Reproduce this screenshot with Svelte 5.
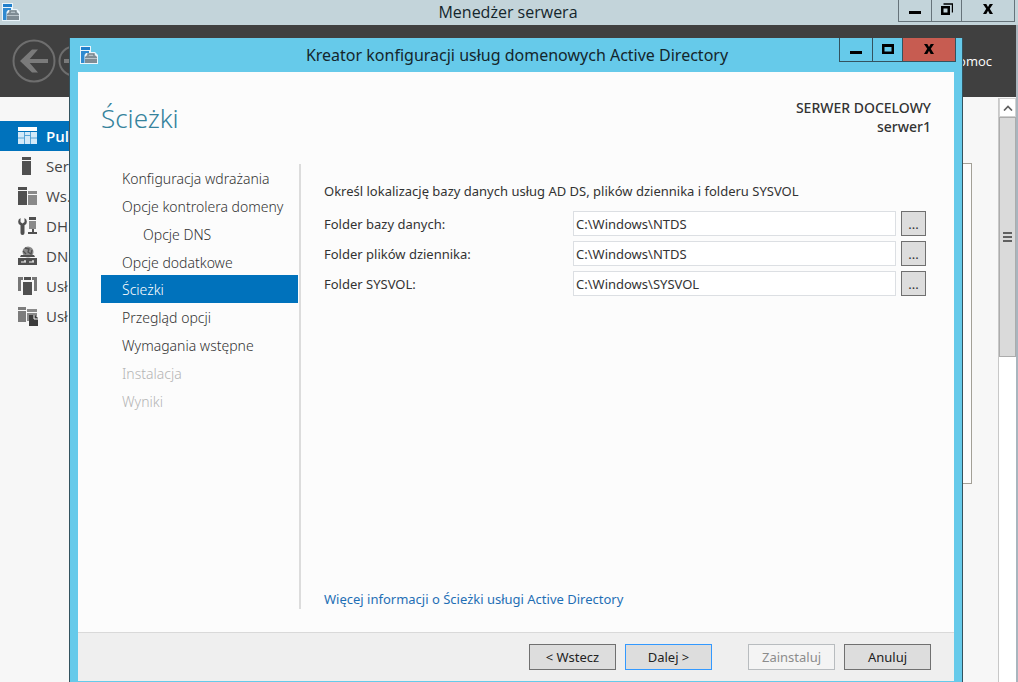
<script>
  const tools = [
    { label: 'Pul', icon: 'dashboard', active: true },
    { label: 'Ser', icon: 'server' },
    { label: 'Ws.', icon: 'servers' },
    { label: 'DH', icon: 'dhcp' },
    { label: 'DN', icon: 'dns' },
    { label: 'Usł', icon: 'domain' },
    { label: 'Usł', icon: 'files' }
  ];

  const steps = [
    { label: 'Konfiguracja wdrażania' },
    { label: 'Opcje kontrolera domeny' },
    { label: 'Opcje DNS', nested: true },
    { label: 'Opcje dodatkowe' },
    { label: 'Ścieżki', current: true },
    { label: 'Przegląd opcji' },
    { label: 'Wymagania wstępne' },
    { label: 'Instalacja', disabled: true },
    { label: 'Wyniki', disabled: true }
  ];

  let folders = $state([
    { id: 'database', label: 'Folder bazy danych:', path: 'C:\\Windows\\NTDS' },
    { id: 'logs', label: 'Folder plików dziennika:', path: 'C:\\Windows\\NTDS' },
    { id: 'sysvol', label: 'Folder SYSVOL:', path: 'C:\\Windows\\SYSVOL' }
  ]);
</script>

{#snippet appIcon()}
  <svg class="app-icon" width="20" height="20" viewBox="0 0 20 20" aria-hidden="true">
    <path d="M1 1h11v6h4l3 3v9H1z" fill="#eaf5fb" />
    <path d="M2 2h9v3H2z" fill="#1f7fcb" />
    <path d="M2 6h8v2H7L5.500 10v8H2z" fill="#2f8ad0" />
    <path d="M9 11V9h6v2" fill="none" stroke="#6f7c84" stroke-width="1.400" />
    <path d="M6 12l1.500-1.500h9L18 12v6H6z" fill="#7f8c94" />
    <path d="M6 13.500h12" stroke="#c9d3d8" stroke-width="0.800" />
  </svg>
{/snippet}

{#snippet windowButtons(restored, danger)}
  <div class="controls">
    <button class="control narrow" aria-label="Minimalizuj">
      <svg width="12" height="12" viewBox="0 0 12 12"><path d="M0 8h12v3H0z" /></svg>
    </button>
    <button class="control mid" aria-label={restored ? 'Maksymalizuj' : 'Przywróć'}>
      <svg width="12" height="12" viewBox="0 0 12 12">
        {#if restored}
          <path d="M0 1h12v10H0zM2.500 4v4.500h7V4z" fill-rule="evenodd" />
        {:else}
          <path d="M0 3h9v9H0zM2.500 5.500v4h4v-4z" fill-rule="evenodd" />
          <path d="M2.500 1h9v8.500" fill="none" stroke="#000" stroke-width="1.400" />
        {/if}
      </svg>
    </button>
    <button class="control wide" class:danger aria-label="Zamknij">
      <svg width="12" height="12" viewBox="0 0 12 12">
        <path d="M1 1h3.300L6 4l1.700-3H11L7.800 5.800 11 11H7.700L6 7.800 4.300 11H1l3.200-5.200z" />
      </svg>
    </button>
  </div>
{/snippet}

{#snippet toolIcon(name)}
  <svg width="20" height="20" viewBox="0 0 20 20" aria-hidden="true">
    {#if name === 'dashboard'}
      <path d="M0 1h19v4H0z" fill="#fff" />
      <path d="M0 6h19v12H0z" fill="#d3e9f8" />
      <path d="M6.500 6v12M12.500 6v12M0 12h6.500M6.500 9.500h6M12.500 12H19" fill="none" stroke="#4b9dd3" stroke-width="0.900" />
    {:else if name === 'server'}
      <path d="M4 1h9v3H4zM4 5h9v14H4z" />
    {:else if name === 'servers'}
      <path d="M0 1h9v3H0zM0 5h9v14H0z" />
      <path d="M10 5h9v3h-9zM10 9h9v10h-9z" fill="#8a8a8a" />
    {:else if name === 'dhcp'}
      <path d="M2.500 2v4l2 1.500 2-1.500V2a4 4 0 0 1 0 7.300V17a2 2 0 0 1-4 0V9.300A4 4 0 0 1 2.500 2z" />
      <path d="M11 1h7v3h-7z" />
      <path d="M11 5h7v8h-7z" fill="#8a8a8a" />
      <path d="M14 13h2v3h3v2h-9v-2h4z" />
    {:else if name === 'dns'}
      <circle cx="10" cy="6" r="5.500" fill="#8a8a8a" />
      <path d="M7 2l4 1-1 3 3 2 1-4M5 5l3 3" fill="none" stroke="#505050" stroke-width="1.300" />
      <path d="M3 9h13l1 2H2zM0 12h19v7H0z" />
      <path d="M3 16h5m3 0h5M7 14v2m8-2v2" stroke="#f7f7f7" stroke-width="1.200" />
    {:else if name === 'domain'}
      <path d="M0 1h5v3H3v11H0zM19 1h-5v3h2v11h3z" fill="#777" />
      <path d="M6 1h7v3H6zM5 6h9v13H5z" />
    {:else}
      <path d="M0 1h8v3H0zM0 5h8v11H0z" fill="#7c7c7c" />
      <path d="M9 3h10v3H9zM9 7h10v3h-7v5H9z" fill="#8a8a8a" />
      <path d="M11 9h6l3 3v8h-9z" fill="#3c3c3c" />
      <path d="M16 9v4h4" fill="none" stroke="#f7f7f7" />
    {/if}
  </svg>
{/snippet}

<div class="manager">
  <header class="titlebar">
    {@render appIcon()}
    <h1>Menedżer serwera</h1>
    {@render windowButtons(false, false)}
  </header>

  <div class="toolbar">
    <div class="history">
      <button class="round" aria-label="Wstecz">
        <svg width="44" height="44" viewBox="0 0 44 44">
          <circle cx="22" cy="22" r="20.500" />
          <path class="arrow" d="M36 22H12" />
          <path class="head" d="M8 22L20 10.500h6L16 22l10 11.500h-6z" />
        </svg>
      </button>
      <button class="round" aria-label="Dalej">
        <svg width="32" height="32" viewBox="0 0 32 32">
          <circle cx="16" cy="16" r="14.500" />
          <path class="arrow" d="M6 16h18M17 9l7 7-7 7" />
        </svg>
      </button>
    </div>
    <a class="help" href="#help">omoc</a>
  </div>

  <div class="workspace">
    <nav class="tools" aria-label="Serwer">
      {#each tools as tool}
        <a class="tool" class:active={tool.active} href="#tool">
          {@render toolIcon(tool.icon)}
          <span>{tool.label}</span>
        </a>
      {/each}
    </nav>
    <div class="panel"></div>
    <div class="scrollbar">
      <button class="scroll-up" aria-label="Przewiń w górę">
        <svg width="10" height="6" viewBox="0 0 10 6"><path d="M1 5.500l4-4 4 4" fill="none" stroke="#606060" stroke-width="1.700" /></svg>
      </button>
      <div class="thumb"><i></i><i></i><i></i></div>
    </div>
  </div>
</div>

<div class="wizard" role="dialog" aria-labelledby="wizard-title">
  <header class="titlebar">
    {@render appIcon()}
    <h2 id="wizard-title">Kreator konfiguracji usług domenowych Active Directory</h2>
    {@render windowButtons(true, true)}
  </header>

  <div class="page">
    <div class="page-head">
      <h3>Ścieżki</h3>
      <p class="target">SERWER DOCELOWY<br />serwer1</p>
    </div>

    <div class="page-body">
      <nav class="steps" aria-label="Kroki">
        <div class="step-list">
          {#each steps as step}
            <button
              class="step"
              class:nested={step.nested}
              class:current={step.current}
              disabled={step.disabled}
            >{step.label}</button>
          {/each}
        </div>
      </nav>

      <section class="form">
        <p>Określ lokalizację bazy danych usług AD DS, plików dziennika i folderu SYSVOL</p>
        <div class="fields">
          {#each folders as folder}
            <label for={folder.id}>{folder.label}</label>
            <input id={folder.id} type="text" bind:value={folder.path} />
            <button class="browse" aria-label="Przeglądaj">...</button>
          {/each}
        </div>
        <a class="more" href="#more">Więcej informacji o Ścieżki usługi Active Directory</a>
      </section>
    </div>
  </div>

  <footer>
    <button class="action">&lt; Wstecz</button>
    <button class="action primary">Dalej &gt;</button>
    <button class="action install" disabled>Zainstaluj</button>
    <button class="action">Anuluj</button>
  </footer>
</div>

<style>
  :global(body) {
    background: #f7f7f7;
    overflow: hidden;
  }

  .manager,
  .wizard {
    box-sizing: border-box;
    display: flex;
    flex-direction: column;
    font-family: 'Noto Sans', 'Open Sans', sans-serif;
    font-size: 13px;
    color: #333;
  }

  .manager {
    font-family: 'Open Sans', 'Noto Sans', sans-serif;
  }

  .manager *,
  .wizard * {
    box-sizing: border-box;
  }

  button,
  input {
    font: inherit;
    color: inherit;
    margin: 0;
    padding: 0;
    border-radius: 0;
  }

  a {
    text-decoration: none;
  }

  h1,
  h2,
  h3,
  p {
    margin: 0;
    font-weight: 400;
  }

  .manager {
    height: 100vh;
    border-right: 2px solid #a9b5be;
  }

  .titlebar {
    display: grid;
    grid-template-columns: 1fr auto 1fr;
    align-items: start;
    flex: none;
  }

  .manager .titlebar {
    height: 25px;
    margin-right: -2px;
    padding: 0 3px 0 1px;
    background: #c3d4da;
  }

  .titlebar h1,
  .titlebar h2 {
    font-size: 16px;
    line-height: 24px;
    color: #14262c;
  }

  .app-icon {
    margin-top: 2px;
  }

  .controls {
    display: flex;
    justify-self: end;
  }

  .control {
    display: flex;
    align-items: center;
    justify-content: center;
    height: 22px;
    padding-bottom: 3px;
    background: transparent;
    border: 1px solid #66737a;
    border-top: 0;
    margin-left: -1px;
  }

  .narrow {
    width: 34px;
  }

  .mid {
    width: 31px;
  }

  .wide {
    width: 54px;
  }

  .toolbar {
    display: flex;
    flex: none;
    align-items: center;
    justify-content: space-between;
    height: 72px;
    padding: 0 24px 0 12px;
    background: #404040;
  }

  .history {
    display: flex;
    align-items: center;
    gap: 2px;
  }

  .round {
    display: flex;
    border: 0;
    background: none;
  }

  .round circle {
    fill: none;
    stroke: #6e6e6e;
    stroke-width: 2;
  }

  .arrow {
    fill: none;
    stroke: #7a7a7a;
    stroke-width: 4;
  }

  .head {
    fill: #7a7a7a;
  }

  .help {
    color: #fff;
  }

  .workspace {
    display: flex;
    flex: 1;
    min-height: 0;
    background: #f7f7f7;
  }

  .tools {
    flex: none;
    width: 70px;
    padding-top: 24px;
  }

  .tool {
    display: flex;
    align-items: center;
    gap: 8px;
    height: 30px;
    padding-left: 18px;
    font-size: 15px;
    color: #444;
  }

  .tool svg {
    flex: none;
    fill: #505050;
  }

  .tool.active {
    background: #0072bc;
    color: #fff;
    font-weight: 600;
  }

  .panel {
    flex: 1;
    height: 321px;
    margin: 66px 26px 0 0;
    background: #fcfcfc;
    border: 1px solid #a3a097;
  }

  .scrollbar {
    display: flex;
    flex-direction: column;
    flex: none;
    width: 18px;
    margin-top: 1px;
    background: #fff;
    border-left: 1px solid #c8c8c8;
  }

  .scroll-up {
    display: flex;
    align-items: center;
    justify-content: center;
    height: 19px;
    background: #fff;
    border: 1px solid #d0d0d0;
  }

  .thumb {
    display: flex;
    flex-direction: column;
    align-items: center;
    justify-content: center;
    gap: 2px;
    height: 240px;
    background: #dadada;
    border: 1px solid #acacac;
  }

  .thumb i {
    width: 9px;
    height: 2px;
    background: #606060;
  }

  .wizard {
    position: absolute;
    inset: 38px 55px 0 69px;
    background: #66caea;
    border: solid #33535f;
    border-width: 0 1px;
    padding: 0 8px 1px;
  }

  .wizard .titlebar {
    height: 34px;
    margin-right: -2px;
  }

  .wizard .titlebar h2 {
    line-height: 34px;
  }

  .wizard .app-icon {
    margin: 7px 0 0 1px;
  }

  .wizard .control {
    height: 24px;
    border-color: #33535f;
    padding-bottom: 1px;
  }

  .wizard .danger {
    background: #c75c51;
  }

  .page {
    display: flex;
    flex: 1;
    flex-direction: column;
    min-height: 0;
    padding: 26px 23px 23px;
    background: #fcfcfc;
  }

  .page-head {
    display: flex;
    justify-content: space-between;
    height: 66px;
  }

  h3 {
    font-size: 26px;
    line-height: 40px;
    font-weight: 300;
    color: #35839c;
  }

  .target {
    font-size: 14px;
    line-height: 19px;
    font-weight: 500;
    text-align: right;
  }

  .page-body {
    display: flex;
    flex: 1;
  }

  .steps {
    flex: none;
    width: 200px;
    padding-right: 1px;
    border-right: 2px solid #dcdcdc;
  }

  .step-list {
    display: grid;
    grid-auto-rows: 1fr;
    height: 250px;
  }

  .step {
    border: 0;
    background: none;
    padding: 2px 0 0 21px;
    font-size: 14px;
    font-weight: 300;
    text-align: left;
    white-space: nowrap;
  }

  .nested {
    padding-left: 42px;
  }

  .current {
    background: #0072bc;
    color: #fff;
  }

  .step:disabled {
    color: #b4b4b4;
  }

  .form {
    display: flex;
    flex: 1;
    flex-direction: column;
    padding: 17px 5px 0 23px;
    line-height: 20px;
  }

  .fields {
    display: grid;
    grid-template-columns: 244px 1fr 25px;
    align-items: center;
    gap: 5px;
    margin-top: 10px;
  }

  .fields input {
    min-width: 0;
    height: 25px;
    padding: 0 2px;
    background: #fff;
    border: 1px solid #dcdfe3;
  }

  .browse {
    height: 25px;
    background: #ddd;
    border: 1px solid #707070;
  }

  .more {
    margin-top: auto;
    color: #1f6fb5;
  }

  footer {
    display: flex;
    flex: none;
    gap: 9px;
    height: 49px;
    padding: 11px 23px 0;
    justify-content: flex-end;
    background: #efefef;
    border-top: 1px solid #d9d9d9;
  }

  .action {
    width: 87px;
    height: 26px;
    background: #ddd;
    border: 1px solid #707070;
    color: #222;
  }

  .primary {
    border-color: #3399ff;
  }

  .install {
    margin-left: 27px;
  }

  .action:disabled {
    background: #f4f4f4;
    border-color: #b8bcbf;
    color: #8c8c8c;
  }
</style>
